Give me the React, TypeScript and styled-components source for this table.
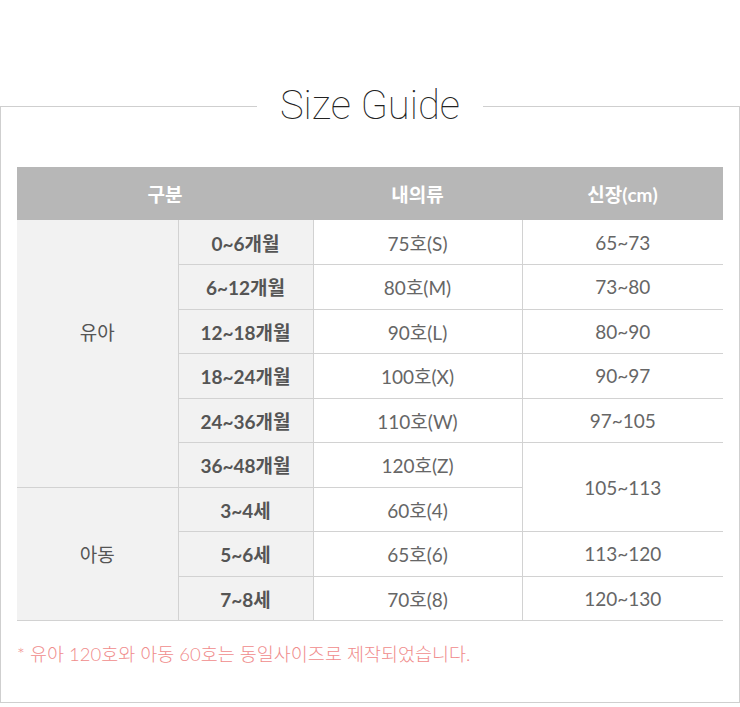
import React from 'react';
import styled, { createGlobalStyle } from 'styled-components';

type Span = { label: string; span: number };
type SizeRow = { group?: Span; filler?: boolean; age: string; size: string; height?: Span };

const rows: SizeRow[] = [
  { group: { label: '유아', span: 5 }, age: '0~6개월', size: '75호(S)', height: { label: '65~73', span: 1 } },
  { age: '6~12개월', size: '80호(M)', height: { label: '73~80', span: 1 } },
  { age: '12~18개월', size: '90호(L)', height: { label: '80~90', span: 1 } },
  { age: '18~24개월', size: '100호(X)', height: { label: '90~97', span: 1 } },
  { age: '24~36개월', size: '110호(W)', height: { label: '97~105', span: 1 } },
  { filler: true, age: '36~48개월', size: '120호(Z)', height: { label: '105~113', span: 2 } },
  { group: { label: '아동', span: 3 }, age: '3~4세', size: '60호(4)' },
  { age: '5~6세', size: '65호(6)', height: { label: '113~120', span: 1 } },
  { age: '7~8세', size: '70호(8)', height: { label: '120~130', span: 1 } },
];

const columns = [161, 135, 209, 201];

const SizeGuide: React.FC = () => {
  return (
    <Frame>
      <Title>Size Guide</Title>
      <Table>
        <colgroup>
          {columns.map((w, i) => (
            <Col key={i} $width={w} />
          ))}
        </colgroup>
        <thead>
          <tr>
            <HeadCell colSpan={2}>구분</HeadCell>
            <HeadCell>내의류</HeadCell>
            <HeadCell>신장(cm)</HeadCell>
          </tr>
        </thead>
        <tbody>
          {rows.map((row, i) => {
            const nextIsFiller = rows[i + row.group?.span!]?.filler;
            return (
              <Row key={row.age}>
                {row.group && (
                  <GroupCell rowSpan={row.group.span} $open={!!nextIsFiller}>
                    {row.group.label}
                  </GroupCell>
                )}
                {row.filler && <GroupCell $open={false} />}
                <AgeCell>{row.age}</AgeCell>
                <ValueCell>{row.size}</ValueCell>
                {row.height && <ValueCell rowSpan={row.height.span}>{row.height.label}</ValueCell>}
              </Row>
            );
          })}
        </tbody>
      </Table>
      <Note>* 유아 120호와 아동 60호는 동일사이즈로 제작되었습니다.</Note>
    </Frame>
  );
};

const App: React.FC = () => (
  <>
    <GlobalStyle />
    <SizeGuide />
  </>
);

const GlobalStyle = createGlobalStyle`
  html, body {
    margin: 0;
    padding: 0;
    background: #fff;
  }
  body {
    font-family: 'Lato', 'Noto Sans CJK KR', sans-serif;
    color: #555;
  }
`;

const Frame = styled.fieldset`
  box-sizing: border-box;
  width: 740px;
  min-width: 0;
  margin: 82px 0 0;
  padding: 37px 16px 36px;
  border: 1px solid #cfcfcf;
`;

const Title = styled.legend`
  margin: 0 auto;
  padding: 0 23px;
  font-family: 'Roboto', sans-serif;
  font-weight: 100;
  font-size: 40px;
  line-height: 48px;
  color: #222;
`;

const Table = styled.table`
  width: 706px;
  border-collapse: collapse;
  table-layout: fixed;
  font-size: 19px;
  text-align: center;
`;

const Col = styled.col<{ $width: number }>`
  width: ${(p) => p.$width}px;
`;

const HeadCell = styled.th`
  height: 53px;
  padding: 0;
  background: #b7b7b7;
  color: #fff;
  font-weight: 700;
  font-size: 19px;
`;

const Row = styled.tr`
  height: 44.5px;
`;

const Cell = styled.td`
  padding: 0;
  border-bottom: 1px solid #d2d2d2;
  vertical-align: middle;
`;

const GroupCell = styled(Cell)<{ $open: boolean }>`
  background: #f2f2f2;
  color: #555;
  ${(p) => (p.$open ? 'border-bottom: none;' : '')}
`;

const AgeCell = styled(Cell)`
  background: #f2f2f2;
  border-left: 1px solid #d2d2d2;
  font-weight: 700;
  color: #555;
`;

const ValueCell = styled(Cell)`
  background: #fff;
  border-left: 1px solid #d2d2d2;
  color: #666;
`;

const Note = styled.p`
  margin: 21px 0 0;
  font-weight: 300;
  font-size: 18.5px;
  line-height: 24px;
  color: #f08c8c;
`;

export default App;
